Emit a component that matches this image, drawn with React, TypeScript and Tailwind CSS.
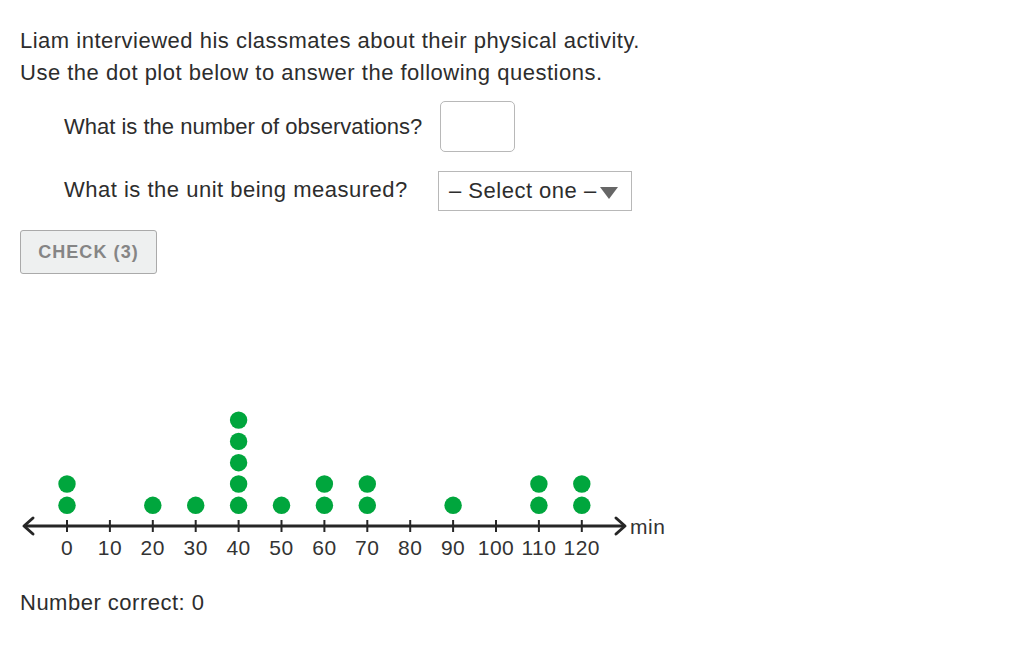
import React from "react";

const FONT = "'Liberation Sans', Arial, sans-serif";

const ticks = [0, 10, 20, 30, 40, 50, 60, 70, 80, 90, 100, 110, 120];
// value -> how many dots stacked
const counts: Record<number, number> = {
  0: 2,
  20: 1,
  30: 1,
  40: 5,
  50: 1,
  60: 2,
  70: 2,
  90: 1,
  110: 2,
  120: 2,
};

const xOf = (v: number) => 67 + (v / 10) * 42.9;
const AXIS_Y = 526;

const DotPlot = () => {
  return (
    <svg width={680} height={306} viewBox="20 274 680 306" className="block">
      {/* axis */}
      <line x1={24} y1={AXIS_Y} x2={624} y2={AXIS_Y} stroke="#262626" strokeWidth={3} />
      <polyline
        points={`33,${AXIS_Y - 8} 24,${AXIS_Y} 33,${AXIS_Y + 8}`}
        fill="none"
        stroke="#262626"
        strokeWidth={3}
        strokeLinecap="round"
        strokeLinejoin="round"
      />
      <polyline
        points={`616,${AXIS_Y - 8} 625,${AXIS_Y} 616,${AXIS_Y + 8}`}
        fill="none"
        stroke="#262626"
        strokeWidth={3}
        strokeLinecap="round"
        strokeLinejoin="round"
      />
      {ticks.map((t) => (
        <g key={t}>
          <line x1={xOf(t)} y1={AXIS_Y - 6} x2={xOf(t)} y2={AXIS_Y + 6} stroke="#262626" strokeWidth={2} />
          <text x={xOf(t)} y={555} textAnchor="middle" fontSize={21} fill="#333" style={{ fontFamily: FONT }}>
            {t}
          </text>
        </g>
      ))}
      <text x={630} y={534} fontSize={21} fill="#333" style={{ fontFamily: FONT }}>
        min
      </text>
      {Object.entries(counts).map(([v, n]) =>
        Array.from({ length: n }).map((_, i) => (
          <circle key={v + "-" + i} cx={xOf(Number(v))} cy={505.3 - i * 21.3} r={8.7} fill="#00a63d" />
        ))
      )}
    </svg>
  );
};

export default function App() {
  return (
    <div
      className="min-h-[645px] w-[1032px] bg-white px-5 pt-[25px] text-[22px] leading-8 tracking-[0.5px] text-[#2d2d2d]"
      style={{ fontFamily: FONT }}
    >
      <p>Liam interviewed his classmates about their physical activity.</p>
      <p>Use the dot plot below to answer the following questions.</p>

      <div className="mt-3 flex items-center pl-[44px]">
        <span className="w-[376px] shrink-0 tracking-normal">What is the number of observations?</span>
        <div className="h-[51px] w-[75px] rounded-[5px] border border-[#b8b8b8] bg-white" />
      </div>

      <div className="mt-[19px] flex items-center pl-[44px]">
        <span className="w-[374px] shrink-0 -translate-y-px">What is the unit being measured?</span>
        <div className="flex h-10 w-[194px] items-center border border-[#b8b8b8] bg-white pl-[10px]">
          <span>– Select one –</span>
          <svg width={18} height={14} viewBox="0 0 18 14" className="ml-[3px] mt-[2px]">
            <polygon points="0,2 18,2 9,14" fill="#666" />
          </svg>
        </div>
      </div>

      <button className="mt-[19px] flex h-11 w-[137px] items-center justify-center rounded-[3px] border border-[#aaa] bg-[#eef0f0] text-[18px] font-bold tracking-[0.06em] text-[#858585]">
        CHECK (3)
      </button>

      <DotPlot />

      <p className="mt-[7px]">Number correct: 0</p>
    </div>
  );
}
